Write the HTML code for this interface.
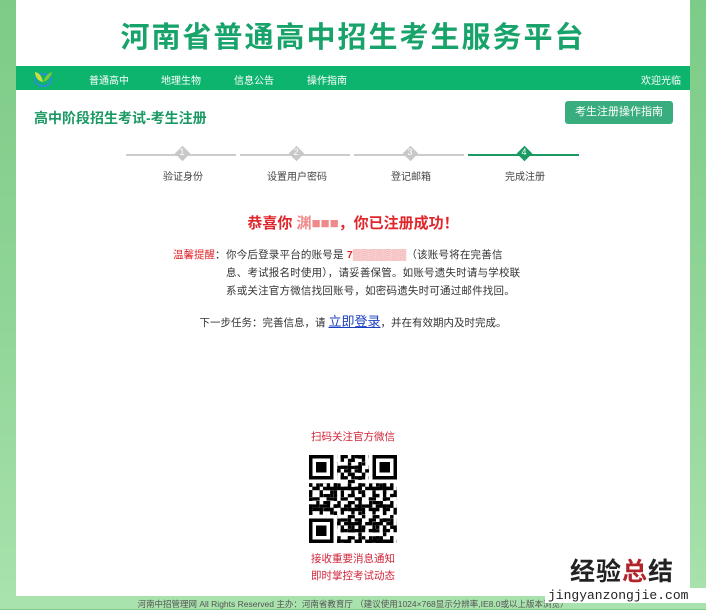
<!DOCTYPE html>
<html><head><meta charset="utf-8"><style>
*{margin:0;padding:0;box-sizing:border-box}
body{width:706px;height:609px;overflow:hidden;background:linear-gradient(180deg,#7dcb86 0%,#8fd597 50%,#a9e2ad 100%);font-family:"Liberation Sans","Noto Sans CJK SC",sans-serif;position:relative}
.panel{position:absolute;left:16px;top:0;width:674px;height:596px;background:#fff}
.title{position:absolute;left:0;width:674px;top:14px;text-align:center;font-size:29px;font-weight:bold;color:#17a36a;letter-spacing:2px}
.nav{position:absolute;left:0;top:66px;width:674px;height:24px;background:#0db46d;color:#fff;font-size:10px}
.nav span{position:absolute;top:6px}
.h{position:absolute;left:18px;top:108px;font-size:14px;font-weight:bold;color:#1a9a62}
.btn{position:absolute;left:549px;top:101px;width:108px;height:23px;background:#3aad7e;color:#fff;border-radius:3px;font-size:11px;text-align:center;line-height:23px}
.line{position:absolute;top:154px;height:2px;background:#ccc}
.dia{position:absolute;top:148px;width:11px;height:11px;background:#c8c8c8;transform:rotate(45deg)}
.num{position:absolute;top:147px;width:12px;text-align:center;font-size:9px;color:#fff}
.lab{position:absolute;top:168px;font-size:10px;color:#444;width:100px;text-align:center}
.red{color:#e0262b}
.c{position:absolute;font-size:10.5px;color:#333;line-height:18px}
</style></head><body>
<div class="panel">
<div class="title">河南省普通高中招生考生服务平台</div>
<div class="nav">
<svg style="position:absolute;left:16px;top:3px" width="22" height="18" viewBox="0 0 22 18"><ellipse cx="11" cy="11" rx="8" ry="6" fill="none" stroke="#2a8fd0" stroke-width="2"/><path d="M11 13 C6 12 3 8 3 3 C8 4 10 8 11 13Z" fill="#c9e03a"/><path d="M11 13 C13 8 16 4 20 3 C19 8 15 12 11 13Z" fill="#7cc93a"/></svg>
<span style="left:73px">普通高中</span><span style="left:145px">地理生物</span><span style="left:218px">信息公告</span><span style="left:291px">操作指南</span><span style="left:625px">欢迎光临</span></div>
<div class="h">高中阶段招生考试-考生注册</div>
<div class="btn">考生注册操作指南</div>
<div class="line" style="left:110px;width:110px"></div>
<div class="line" style="left:224px;width:110px"></div>
<div class="line" style="left:338px;width:110px"></div>
<div class="line" style="left:452px;width:111px;background:#1a9a62"></div>
<div class="dia" style="left:161px"></div><div class="num" style="left:160px">1</div>
<div class="dia" style="left:275px"></div><div class="num" style="left:274px">2</div>
<div class="dia" style="left:389px"></div><div class="num" style="left:388px">3</div>
<div class="dia" style="left:503px;background:#1a9a62"></div><div class="num" style="left:502px">4</div>
<div class="lab" style="left:117px">验证身份</div><div class="lab" style="left:231px">设置用户密码</div><div class="lab" style="left:345px">登记邮箱</div><div class="lab" style="left:459px">完成注册</div>
<div style="position:absolute;left:0;width:674px;top:212px;text-align:center;font-size:15px;font-weight:bold;color:#e0262b">恭喜你 <span style="color:#f08a8a">渊■■■</span>，你已注册成功！</div>
<div class="c" style="left:157px;top:246px"><span class="red">温馨提醒</span>：</div>
<div class="c" style="left:210px;top:246px;width:298px;letter-spacing:0.2px">你今后登录平台的账号是 <b class="red">7▒▒▒▒▒▒▒</b>（该账号将在完善信息、考试报名时使用），请妥善保管。如账号遗失时请与学校联系或关注官方微信找回账号，如密码遗失时可通过邮件找回。</div>
<div class="c" style="left:0;width:674px;text-align:center;top:313px">下一步任务：完善信息，请 <span style="color:#1a3fc0;text-decoration:underline;font-size:13px">立即登录</span>，并在有效期内及时完成。</div>
<div class="c red" style="left:0;width:674px;text-align:center;top:428px;color:#d0253a">扫码关注官方微信</div>
<svg style="position:absolute;left:293px;top:455px" width="88" height="88" viewBox="0 0 25 25" shape-rendering="crispEdges">
<defs><pattern id="a" width="3" height="5" patternUnits="userSpaceOnUse"><rect width="1" height="2"/><rect x="2" y="3" width="1" height="1"/><rect x="1" y="4" width="2" height="1"/></pattern>
<pattern id="b" width="4" height="3" patternUnits="userSpaceOnUse"><rect x="1" width="2" height="1"/><rect x="3" y="2" width="1" height="1"/></pattern>
<pattern id="c" width="7" height="2" patternUnits="userSpaceOnUse"><rect x="4" y="1" width="2" height="1"/><rect x="0" y="0" width="1" height="1"/></pattern></defs>
<rect width="25" height="25" fill="url(#a)"/><rect width="25" height="25" fill="url(#b)"/><rect width="25" height="25" fill="url(#c)"/>
<g><rect width="8" height="8" fill="#fff"/><rect x="17" width="8" height="8" fill="#fff"/><rect y="17" width="8" height="8" fill="#fff"/>
<rect width="7" height="7"/><rect x="1" y="1" width="5" height="5" fill="#fff"/><rect x="2" y="2" width="3" height="3"/>
<rect x="18" width="7" height="7"/><rect x="19" y="1" width="5" height="5" fill="#fff"/><rect x="20" y="2" width="3" height="3"/>
<rect y="18" width="7" height="7"/><rect x="1" y="19" width="5" height="5" fill="#fff"/><rect x="2" y="20" width="3" height="3"/></g>
</svg>
<div class="c" style="left:0;width:674px;text-align:center;top:551px;color:#d0253a;line-height:17px">接收重要消息通知<br>即时掌控考试动态</div>
</div>
<div style="position:absolute;left:0;width:706px;top:598px;text-align:center;font-size:8.5px;color:#555">河南中招管理网 All Rights Reserved 主办：河南省教育厅 （建议使用1024×768显示分辨率,IE8.0或以上版本浏览）</div>
<div style="position:absolute;left:570px;top:552px;font-size:25px;font-weight:bold;color:#222;letter-spacing:1px">经验<span style="color:#b0242a">总</span>结</div>
<div style="position:absolute;left:545px;top:588px;width:161px;height:15px;background:#fff;font-family:'Liberation Mono',monospace;font-size:13px;color:#222;line-height:15px;padding-left:3px">jingyanzongjie.com</div>
</body></html>
